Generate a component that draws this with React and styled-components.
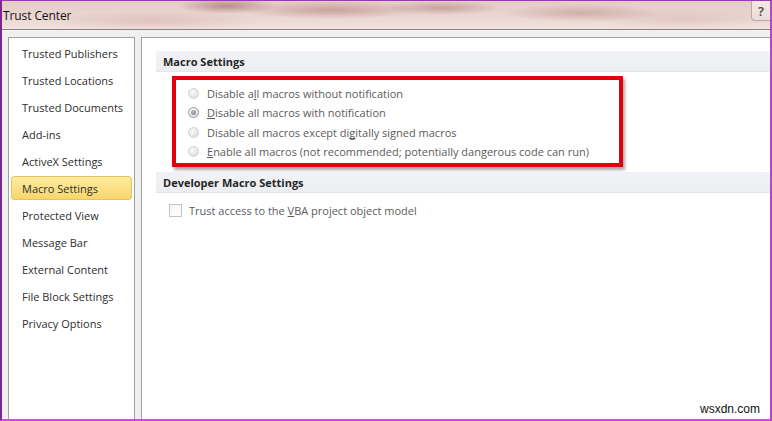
import React from "react";
import styled, { createGlobalStyle } from "styled-components";

const Global = createGlobalStyle`
  html, body { margin: 0; padding: 0; background: #ffffff; }
  * { box-sizing: border-box; }
`;

const FONT = `"Open Sans", "Noto Sans", Arial, sans-serif`;

const Window = styled.div`
  position: relative;
  width: 772px;
  height: 421px;
  display: flex;
  flex-direction: column;
  border-left: 2px solid #7d2590;
  border-top: 1px solid #9a3aae;
  border-right: 2px solid #b545d0;
  border-bottom: 2px solid #cf48e2;
  font-family: ${FONT};
  overflow: hidden;
`;

const TitleBar = styled.div`
  height: 29px;
  flex: none;
  display: flex;
  align-items: center;
  justify-content: space-between;
  padding-left: 1px;
  background:
    radial-gradient(ellipse 50px 8px at 225px 5px, rgba(140, 80, 70, 0.5), transparent),
    radial-gradient(ellipse 90px 9px at 330px 9px, rgba(165, 105, 95, 0.45), transparent),
    radial-gradient(ellipse 60px 7px at 440px 7px, rgba(150, 95, 85, 0.4), transparent),
    radial-gradient(ellipse 80px 9px at 580px 12px, rgba(170, 120, 110, 0.4), transparent),
    radial-gradient(ellipse 110px 10px at 150px 20px, rgba(200, 150, 140, 0.35), transparent),
    radial-gradient(ellipse 100px 10px at 680px 18px, rgba(205, 160, 150, 0.3), transparent),
    linear-gradient(to bottom, #e4cbc6 0%, #eAd6d2 55%, #f1e2df 100%);
  border-bottom: 1px solid #8a8284;
`;

const Title = styled.span`
  font-size: 12px;
  color: #111;
  letter-spacing: -0.1px;
`;

const HelpButton = styled.div`
  align-self: flex-start;
  width: 19px;
  height: 20px;
  display: flex;
  align-items: center;
  justify-content: center;
  border-left: 1px solid #b7a7a7;
  border-bottom: 1px solid #b7a7a7;
  border-bottom-left-radius: 4px;
  background: linear-gradient(to bottom, #f3e9e8, #eadcda);
  font-size: 13px;
  font-weight: 600;
  color: #4a4a4a;
`;

const Body = styled.div`
  flex: 1;
  display: flex;
  gap: 6px;
  padding: 7px 0 0 6px;
  background: #f0f0f0;
  min-height: 0;
`;

const Sidebar = styled.nav`
  width: 127px;
  flex: none;
  display: flex;
  flex-direction: column;
  gap: 3px;
  padding: 3px 1px 0;
  background: #ffffff;
  border: 1px solid #a0a0a0;
  border-bottom: none;
`;

const NavItem = styled.div`
  height: 24px;
  display: flex;
  align-items: center;
  padding-left: 10px;
  border-radius: 3px;
  font-size: 11px;
  color: #2e2e2e;
  border: 1px solid ${(p) => (p.$active ? "#e5c365" : "transparent")};
  background: ${(p) =>
    p.$active ? "linear-gradient(to bottom, #fdeba0 0%, #fbe187 50%, #f8d668 100%)" : "transparent"};
  margin: 0 1px;
`;

const Main = styled.main`
  flex: 1;
  background: #ffffff;
  border-left: 1px solid #a0a0a0;
  border-top: 1px solid #a0a0a0;
  padding: 13px 0 0 14px;
  display: flex;
  flex-direction: column;
`;

const SectionHeader = styled.div`
  height: 21px;
  flex: none;
  display: flex;
  align-items: center;
  padding-left: 7px;
  background: linear-gradient(to bottom, #f1f2f5, #eceef2);
  border-bottom: 1px solid #e3e5ea;
  font-size: 11px;
  font-weight: 700;
  color: #262626;
`;

const Highlight = styled.div`
  margin: 4px 0 5px 16px;
  width: 451px;
  height: 91px;
  border: 4px solid #e3000b;
  box-shadow: 2px 3px 3px rgba(0, 0, 0, 0.35);
  display: flex;
  flex-direction: column;
  justify-content: center;
  padding-left: 12px;
  padding-top: 2px;
`;

const OptionRow = styled.label`
  height: 19.5px;
  display: flex;
  align-items: center;
  gap: 8px;
  font-size: 11px;
  color: #5c5c5c;
`;

const Radio = styled.span`
  position: relative;
  width: 11px;
  height: 11px;
  flex: none;
  border-radius: 50%;
  border: 1px solid ${(p) => (p.$checked ? "#9a9a9a" : "#d2d2d2")};
  background: radial-gradient(circle at 40% 35%, #fafafa 0%, #e6e6e6 60%, #d8d8d8 100%);
  &::after {
    content: "";
    display: ${(p) => (p.$checked ? "block" : "none")};
    position: absolute;
    left: 2px;
    top: 2px;
    width: 5px;
    height: 5px;
    border-radius: 50%;
    background: radial-gradient(circle at 40% 35%, #b8b8b8, #7c7c7c);
  }
`;

const CheckRow = styled.label`
  margin: 10px 0 0 13px;
  height: 14px;
  display: flex;
  align-items: center;
  gap: 7px;
  font-size: 11px;
  color: #5c5c5c;
`;

const Checkbox = styled.span`
  width: 13px;
  height: 13px;
  flex: none;
  border: 1px solid #c4c4c4;
  background: linear-gradient(to bottom right, #f4f4f4, #ffffff);
`;

const Key = styled.span`
  text-decoration: underline;
  text-decoration-skip-ink: none;
`;

const Watermark = styled.span`
  position: absolute;
  right: 10px;
  bottom: 3px;
  font-family: "Liberation Sans", Arial, sans-serif;
  font-size: 12px;
  color: #111;
`;

const navItems = [
  "Trusted Publishers",
  "Trusted Locations",
  "Trusted Documents",
  "Add-ins",
  "ActiveX Settings",
  "Macro Settings",
  "Protected View",
  "Message Bar",
  "External Content",
  "File Block Settings",
  "Privacy Options",
];

export default function App() {
  return (
    <>
      <Global />
      <Window>
        <TitleBar>
          <Title>Trust Center</Title>
          <HelpButton>?</HelpButton>
        </TitleBar>
        <Body>
          <Sidebar>
            {navItems.map((item) => (
              <NavItem key={item} $active={item === "Macro Settings"}>
                {item}
              </NavItem>
            ))}
          </Sidebar>
          <Main>
            <SectionHeader>Macro Settings</SectionHeader>
            <Highlight>
              <OptionRow>
                <Radio />
                <span>
                  Disable a<Key>l</Key>l macros without notification
                </span>
              </OptionRow>
              <OptionRow>
                <Radio $checked />
                <span>
                  <Key>D</Key>isable all macros with notification
                </span>
              </OptionRow>
              <OptionRow>
                <Radio />
                <span>
                  Disable all macros except di<Key>g</Key>itally signed macros
                </span>
              </OptionRow>
              <OptionRow>
                <Radio />
                <span>
                  <Key>E</Key>nable all macros (not recommended; potentially dangerous code can run)
                </span>
              </OptionRow>
            </Highlight>
            <SectionHeader>Developer Macro Settings</SectionHeader>
            <CheckRow>
              <Checkbox />
              <span>
                Trust access to the <Key>V</Key>BA project object model
              </span>
            </CheckRow>
          </Main>
        </Body>
        <Watermark>wsxdn.com</Watermark>
      </Window>
    </>
  );
}
